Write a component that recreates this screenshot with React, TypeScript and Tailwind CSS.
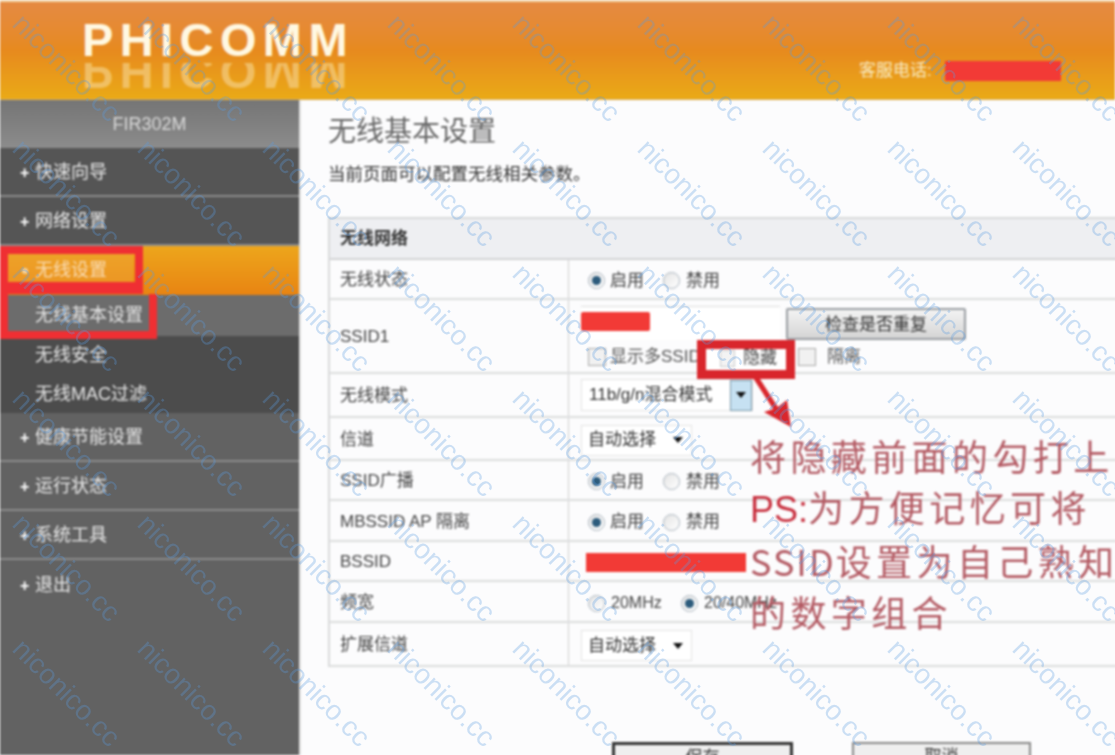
import React from "react";

const cjk = "font-['Liberation_Sans','Noto_Sans_CJK_SC',sans-serif]";

const Radio = ({ on }: { on?: boolean }) => (
  <span className="flex h-[17px] w-[17px] shrink-0 items-center justify-center rounded-full border border-[#a9b3bd] bg-gradient-to-br from-[#e4e4e4] to-[#ffffff]">
    {on && <span className="h-[9px] w-[9px] rounded-full bg-[#2c5b7c]" />}
  </span>
);

const RadioPair = () => (
  <div className="flex items-center pl-[19px] text-[#444]">
    <Radio on />
    <span className="ml-[5px] w-[53px] text-[17px]">启用</span>
    <Radio />
    <span className="ml-[6px] text-[17px]">禁用</span>
  </div>
);

const Checkbox = () => <span className="h-[18px] w-[18px] shrink-0 border border-[#aaa] bg-[#f1f1f1]" />;

const Select = ({ label }: { label: string }) => (
  <div className="ml-[12px] flex h-[31px] w-[111px] items-center border border-[#e3e3e3] bg-white pl-[6px] text-[17px] text-[#333]">
    <span className="w-[85px]">{label}</span>
    <span className="h-0 w-0 border-x-[5px] border-t-[6px] border-x-transparent border-t-[#111]" />
  </div>
);

const Row = ({ h, label, children }: { h: string; label: string; children?: React.ReactNode }) => (
  <div className={`flex border-b-2 border-[#dcdddd] ${h}`}>
    <div className="flex w-[239px] shrink-0 items-center border-r border-[#cfcfcf] pl-[10px] pt-[2px] text-[17px] text-[#444]">
      {label}
    </div>
    <div className="flex flex-1 items-center pt-[3px]">{children}</div>
  </div>
);

const MenuItem = ({ label, dark }: { label: string; dark?: boolean }) => (
  <div
    className={`flex h-[49px] items-center border-b-2 border-[#8b8b8b] pt-[2px] pl-[20px] text-[18px] text-[#e8e8e8] ${
      dark ? "bg-[#555555]" : "bg-[#626262]"
    }`}
  >
    <span className="mr-[4px] w-[11px] text-[16px] font-bold text-white">+</span>
    {label}
  </div>
);

const SubItem = ({ label, className }: { label: string; className: string }) => (
  <div className={`flex items-center pl-[35px] text-[18px] text-[#e4e4e4] ${className}`}>{label}</div>
);

const marks = Array.from({ length: 63 });

export default function App() {
  return (
    <div className={`relative h-[755px] w-[1115px] overflow-hidden bg-[#fcfcfd] ${cjk}`}>
      <div className="blur-[0.8px]">
        <header className="relative flex h-[100px] items-start justify-between border-t-2 border-b border-t-[#f3d8ab] border-b-[#d9b060] bg-gradient-to-b from-[#e58a42] via-[#e78a1e] to-[#eaaa16]">
          <div className="relative ml-[82px] mt-[11px] font-['Liberation_Sans',sans-serif] text-[47px] font-bold leading-[54px] tracking-[6.4px] text-[#fff8e2]">
            PHICOMM
            <div className="mt-[-4px] h-[36px] overflow-hidden text-[#f5cf85]/70 [transform:scaleY(-1)]">PHICOMM</div>
          </div>
          <div className="mr-[54px] mt-[56px] flex items-center text-[17px] text-[#f8e9c0]">
            <span className="mr-[2px] w-[84px] whitespace-nowrap">客服电话:</span>
            <span className="h-[20px] w-[116px] bg-[#f23a36]" />
          </div>
        </header>
        <div className="flex h-[655px]">
          <aside className="w-[301px] shrink-0 border-r-2 border-[#e2e2e2] bg-[#626262]">
            <div className="flex h-[48px] items-center justify-center bg-gradient-to-b from-[#757575] to-[#8c8c8c] font-['Liberation_Sans',sans-serif] text-[18px] text-[#d8d8d8]">
              FIR302M
            </div>
            <MenuItem label="快速向导" dark />
            <MenuItem label="网络设置" dark />
            <div className="flex h-[49px] items-center bg-gradient-to-b from-[#eda61c] to-[#e88412] pl-[22px] text-[18px] text-white">
              <span className="mr-[9px] h-[6px] w-[6px] rounded-full bg-[#f5f0dc]" />
              <span className="-ml-[2px]">无线设置</span>
            </div>
            <SubItem label="无线基本设置" className="h-[41px] bg-[#6c6c6c]" />
            <SubItem label="无线安全" className="h-[39px] bg-[#4c4c4c]" />
            <SubItem label="无线MAC过滤" className="h-[38px] bg-[#4c4c4c]" />
            <MenuItem label="健康节能设置" />
            <MenuItem label="运行状态" />
            <MenuItem label="系统工具" />
            <div className="flex h-[49px] items-center pl-[20px] pt-[2px] text-[18px] text-[#e8e8e8]">
              <span className="mr-[4px] w-[11px] text-[16px] font-bold text-white">+</span>
              退出
            </div>
          </aside>
          <main className="min-w-0 flex-1 pl-[27px]">
            <h1 className="mt-[13px] text-[28px] leading-[38px] text-[#666]">无线基本设置</h1>
            <p className="mt-[10px] text-[17.5px] leading-[26px] whitespace-nowrap text-[#333]">当前页面可以配置无线相关参数。</p>
            <div className="mt-[30px] w-[820px] border-t-2 border-l-2 border-[#d9dadb]">
              <div className="flex h-[41px] items-center border-b-2 border-[#d2d3d5] bg-[#eeeff2] pl-[10px] text-[17px] font-bold text-[#333]">
                无线网络
              </div>
              <Row h="h-[40px]" label="无线状态">
                <RadioPair />
              </Row>
              <Row h="h-[74px]" label="SSID1">
                <div className="flex flex-col">
                  <div className="flex items-center pl-[12px]">
                    <div className="flex h-[34px] w-[199px] items-start border-t border-[#ddd] bg-white pt-[5px]">
                      <span className="h-[19px] w-[69px] rounded-[2px] bg-[#f23a36]" />
                    </div>
                    <div className="ml-[6px] mt-[3px] flex h-[32px] w-[180px] items-center justify-center rounded-[2px] border-2 border-[#9a9ea3] bg-gradient-to-b from-[#f3f3f3] to-[#d5d5d5] text-[17px] text-[#333]">
                      检查是否重复
                    </div>
                  </div>
                  <div className="mt-[4px] flex items-center pl-[19px] text-[17px] text-[#555]">
                    <Checkbox />
                    <span className="ml-[4px] w-[188px] whitespace-nowrap">显示多SSID</span>
                    <Checkbox />
                    <span className="ml-[11px]">隔离</span>
                  </div>
                </div>
              </Row>
              <Row h="h-[44px]" label="无线模式">
                <div className="ml-[12px] -mt-[3px] flex h-[32px] w-[172px] items-center border border-[#e3e3e3] bg-white pl-[7px] text-[17px] text-[#333]">
                  <span className="w-[142px] whitespace-nowrap">11b/g/n混合模式</span>
                  <span className="flex h-[31px] w-[22px] items-center justify-center border border-[#7a98a8] bg-[#c6e1f2]">
                    <span className="h-0 w-0 border-x-[5px] border-t-[6px] border-x-transparent border-t-[#111]" />
                  </span>
                </div>
              </Row>
              <Row h="h-[43px]" label="信道">
                <Select label="自动选择" />
              </Row>
              <Row h="h-[40px]" label="SSID广播">
                <RadioPair />
              </Row>
              <Row h="h-[41px]" label="MBSSID AP 隔离">
                <RadioPair />
              </Row>
              <Row h="h-[40px]" label="BSSID">
                <span className="ml-[17px] h-[19px] w-[160px] bg-[#f23a36]" />
              </Row>
              <Row h="h-[41px]" label="频宽">
                <div className="flex items-center pl-[19px] text-[16px] text-[#444]">
                  <Radio />
                  <span className="ml-[6px] w-[70px]">20MHz</span>
                  <Radio on />
                  <span className="ml-[6px] whitespace-nowrap">20/40MHz</span>
                </div>
              </Row>
              <Row h="h-[44px]" label="扩展信道">
                <Select label="自动选择" />
              </Row>
            </div>
            <div className="ml-[284px] mt-[75px] flex">
              <div className="flex h-[40px] w-[181px] justify-center border-[3px] border-[#333] bg-[#efefef] text-[17px] text-[#333]">保存</div>
              <div className="ml-[59px] flex h-[40px] w-[179px] justify-center border-2 border-[#888] bg-[#efefef] text-[17px] text-[#333]">取消</div>
            </div>
          </main>
        </div>

        {/* red markup drawn on top of the screenshot */}
        <div className="absolute left-0 top-[246px] h-[48px] w-[143px] border-[8px] border-b-[12px] border-[#ef2f33]" />
        <div className="absolute left-[8px] top-[254px] h-[28px] w-[125px] bg-[#f0a63c]/40" />
        <div className="absolute left-0 top-[294px] h-[45px] w-[157px] border-[8px] border-t-0 border-[#ef2f33]" />
        <div className="absolute left-[697px] top-[340px] h-[39px] w-[98px] border-[9px] border-[#d9262c] bg-white" />
        <div className="absolute left-[720px] top-[350px] h-[17px] w-[15px] border border-[#ccc] bg-[#f3f3f3]" />
        <span className="absolute left-[743px] top-[347px] text-[17px] leading-[22px] text-[#444]">隐藏</span>
        <svg className="absolute left-[750px] top-[376px]" width="46" height="54" viewBox="0 0 46 54">
          <path d="M3 2 L8 0 L28 31 L37 24 L41 51 L14 36 L23 33 Z" fill="#d9262c" />
        </svg>
        <div className="absolute left-[750px] top-[430px] font-['Noto_Sans_CJK_SC',sans-serif] text-[36px] leading-[51px] tracking-[4.4px] whitespace-nowrap text-[#b35a63]">
          <div>将隐藏前面的勾打上</div>
          <div>
            <span className="font-['Liberation_Sans',sans-serif] tracking-normal text-[#c8303f]">PS:</span>为方便记忆可将
          </div>
          <div>
            <span className="tracking-[2px]">SSID</span>设置为自己熟知
          </div>
          <div>的数字组合</div>
        </div>
      </div>

      {/* niconico.cc watermark, repeats every 125px */}
      <div className="pointer-events-none absolute left-[4px] top-[5px] grid grid-cols-[repeat(9,125px)] auto-rows-[125px] font-['Liberation_Sans',sans-serif]">
        {marks.map((_, i) => (
          <div key={i} className="flex items-center justify-center">
            <span className="rotate-45 text-[28px] whitespace-nowrap text-[#5b9be0]/30">niconico.cc</span>
          </div>
        ))}
      </div>
    </div>
  );
}
